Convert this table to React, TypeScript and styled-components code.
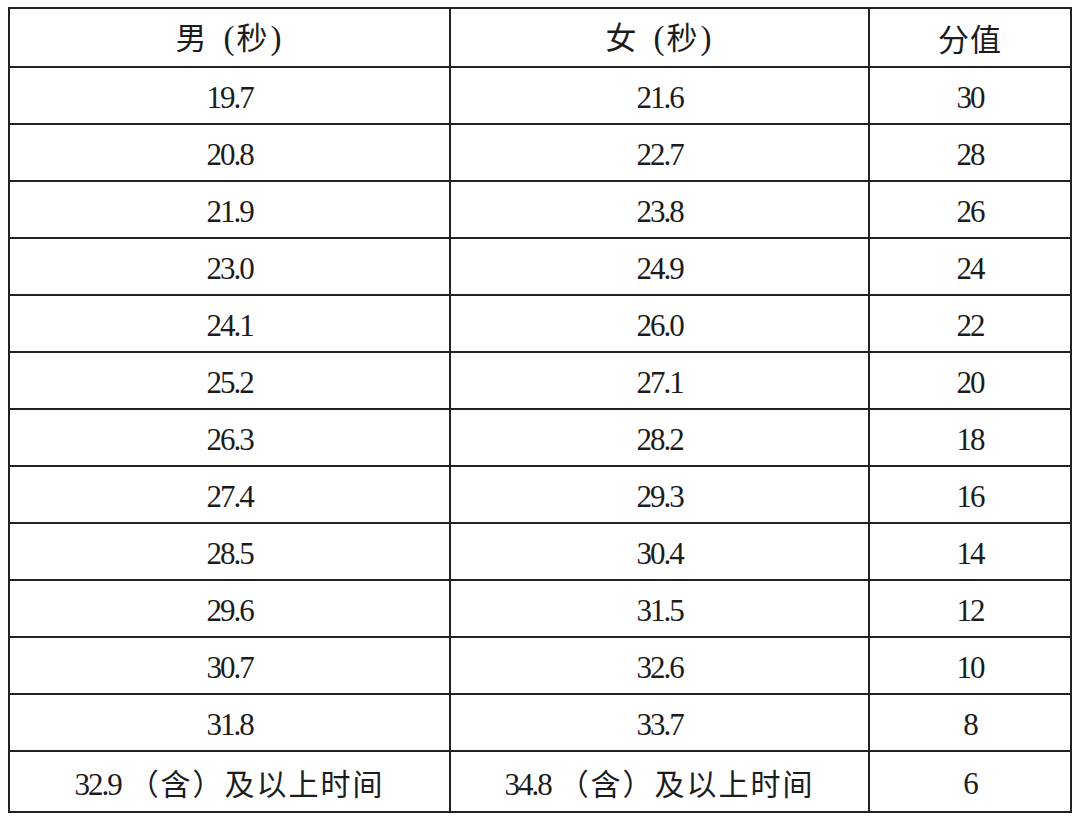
import React from 'react';
import styled, { createGlobalStyle } from 'styled-components';

const GlobalStyle = createGlobalStyle`
    html, body {
        margin: 0;
        padding: 0;
        background: #ffffff;
    }
`;

const rows = [
    ['19.7', '21.6', '30'],
    ['20.8', '22.7', '28'],
    ['21.9', '23.8', '26'],
    ['23.0', '24.9', '24'],
    ['24.1', '26.0', '22'],
    ['25.2', '27.1', '20'],
    ['26.3', '28.2', '18'],
    ['27.4', '29.3', '16'],
    ['28.5', '30.4', '14'],
    ['29.6', '31.5', '12'],
    ['30.7', '32.6', '10'],
    ['31.8', '33.7', '8'],
];

const Page = styled.div`
    padding: 7px 0 0 8px;
    width: 1080px;
    height: 824px;
    box-sizing: border-box;
    background: #fff;
`;

const Table = styled.table`
    width: 1062px;
    border-collapse: collapse;
    table-layout: fixed;
    border: 2px solid #222;
    color: #1c1c1c;
`;

const Row = styled.tr<{ $h: number }>`
    height: ${(props) => props.$h}px;
`;

const HeadCell = styled.th`
    border: 2px solid #222;
    padding: 0;
    font-family: 'Noto Sans CJK SC', sans-serif;
    font-weight: 400;
    font-size: 31px;
    letter-spacing: 1px;
    text-align: center;
    vertical-align: middle;
    line-height: 1;
`;

const Cell = styled.td`
    border: 2px solid #222;
    padding: 3px 0 0;
    font-family: 'Liberation Serif', 'Noto Sans CJK SC', serif;
    font-size: 31px;
    letter-spacing: -2px;
    text-align: center;
    vertical-align: middle;
    line-height: 1;
`;

const Cjk = styled.span`
    font-family: 'Noto Sans CJK SC', sans-serif;
    font-size: 30px;
    letter-spacing: 2px;
    margin-left: 8px;
`;

const Paren = styled.span`
    font-family: 'Liberation Serif', serif;
    font-weight: 400;
    font-size: 33px;
    letter-spacing: 0;
    margin: 0 2px;
`;

const Gap = styled.span`
    display: inline-block;
    width: 14px;
`;

const App = () => (
    <>
        <GlobalStyle />
        <Page>
            <Table>
                <colgroup>
                    <col style={{ width: 441 }} />
                    <col style={{ width: 419 }} />
                    <col style={{ width: 202 }} />
                </colgroup>
                <thead>
                    <Row $h={59}>
                        <HeadCell>男<Gap /><Paren>(</Paren>秒<Paren>)</Paren></HeadCell>
                        <HeadCell>女<Gap /><Paren>(</Paren>秒<Paren>)</Paren></HeadCell>
                        <HeadCell>分值</HeadCell>
                    </Row>
                </thead>
                <tbody>
                    {rows.map((r, i) => (
                        <Row key={i} $h={57}>
                            {r.map((v, j) => (
                                <Cell key={j}>{v}</Cell>
                            ))}
                        </Row>
                    ))}
                    <Row $h={61}>
                        <Cell>
                            32.9<Cjk>（含）及以上时间</Cjk>
                        </Cell>
                        <Cell>
                            34.8<Cjk>（含）及以上时间</Cjk>
                        </Cell>
                        <Cell>6</Cell>
                    </Row>
                </tbody>
            </Table>
        </Page>
    </>
);

export default App;
